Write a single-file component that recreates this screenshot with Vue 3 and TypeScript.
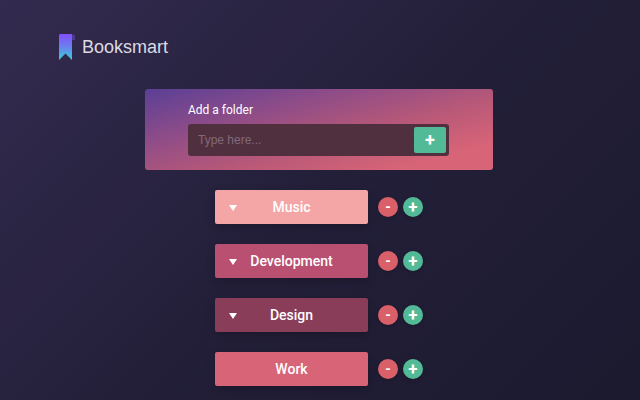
<script setup lang="ts">
interface Folder { name: string; color: string; arrow: boolean }
const folders: Folder[] = [
  { name: 'Music', color: '#f4a6a6', arrow: true },
  { name: 'Development', color: '#b95071', arrow: true },
  { name: 'Design', color: '#8a3d58', arrow: true },
  { name: 'Work', color: '#d86477', arrow: false },
]
</script>

<template>
  <div class="page">
    <header class="brand">
      <svg class="logo" width="17" height="26" viewBox="0 0 17 26">
        <defs>
          <linearGradient id="bm" x1="0" y1="0" x2="0" y2="1">
            <stop offset="0" stop-color="#7f4ffb" />
            <stop offset="0.45" stop-color="#6d7bf0" />
            <stop offset="1" stop-color="#38cfd8" />
          </linearGradient>
        </defs>
        <path d="M13 0.5H15.5C16.5 0.5 17 1 17 2V6H14Z" fill="#4e3a8c" />
        <path d="M2.5 0H13.5C14 0 14 1 14 2V26L7.5 19.5L1 26V1.5C1 .5 1.5 0 2.5 0Z" fill="url(#bm)" />
      </svg>
      <span class="brand-name">Booksmart</span>
    </header>

    <section class="card">
      <label class="card-label">Add a folder</label>
      <div class="field">
        <span class="placeholder">Type here...</span>
        <button class="add-btn">+</button>
      </div>
    </section>

    <ul class="folders">
      <li v-for="f in folders" :key="f.name" class="row">
        <div class="folder" :style="{ background: f.color }">
          <span v-if="f.arrow" class="arrow"></span>
          <span class="folder-name">{{ f.name }}</span>
        </div>
        <span class="round minus">-</span>
        <span class="round plus">+</span>
      </li>
    </ul>
  </div>
</template>

<style>
html, body { margin: 0; background: #211e35; }
</style>

<style scoped>
.page {
  width: 640px;
  height: 400px;
  overflow: hidden;
  box-sizing: border-box;
  padding: 34px 0 0;
  background: linear-gradient(135deg, #332b4f 0%, #231f39 50%, #1b1a2e 100%);
  display: flex;
  flex-direction: column;
  align-items: center;
}
.brand {
  align-self: flex-start;
  margin-left: 58px;
  height: 26px;
  display: flex;
  align-items: center;
  gap: 7px;
}
.logo { display: block; }
.brand-name {
  font-family: "Liberation Sans", sans-serif;
  font-size: 18px;
  color: #dcdae2;
}
.card {
  box-sizing: border-box;
  width: 348px;
  height: 81px;
  margin: 29px 2px 0 0;
  padding: 14px 44px 0 43px;
  border-radius: 3px;
  background: linear-gradient(165deg, #5a3f96 0%, #8d4c88 30%, #b75878 58%, #d86477 85%);
}
.card-label {
  display: block;
  height: 21px;
  font-family: Roboto, sans-serif;
  font-size: 12px;
  font-weight: 450;
  line-height: 15px;
  color: #fff;
}
.field {
  height: 32px;
  box-sizing: border-box;
  padding: 3px;
  border-radius: 3px;
  background: #50303f;
  display: flex;
  align-items: center;
  justify-content: space-between;
}
.placeholder {
  margin-left: 7px;
  font-family: "Liberation Sans", sans-serif;
  font-size: 12px;
  color: #806a78;
}
.add-btn {
  width: 32px;
  height: 26px;
  padding: 0;
  border: 0;
  border-radius: 2px;
  background: #52ba96;
  color: #fff;
  font-family: Roboto, sans-serif;
  font-size: 18px;
  font-weight: 700;
  line-height: 26px;
}
.folders {
  list-style: none;
  margin: 20px 2px 0 0;
  padding: 0;
  display: flex;
  flex-direction: column;
  gap: 20px;
}
.row {
  display: flex;
  align-items: center;
  gap: 5px;
}
.folder {
  position: relative;
  width: 153px;
  height: 34px;
  margin-right: 5px;
  border-radius: 2px;
  box-shadow: 0 3px 8px rgba(0, 0, 0, 0.22);
  display: flex;
  align-items: center;
  justify-content: center;
}
.folder-name {
  font-family: Roboto, sans-serif;
  font-size: 14px;
  font-weight: 500;
  color: #fff;
}
.arrow {
  position: absolute;
  left: 14px;
  top: 15px;
  width: 0;
  height: 0;
  border-left: 4px solid transparent;
  border-right: 4px solid transparent;
  border-top: 6px solid #fff;
}
.round {
  width: 20px;
  height: 20px;
  border-radius: 50%;
  color: #fff;
  font-family: Roboto, sans-serif;
  font-weight: 700;
  display: flex;
  align-items: center;
  justify-content: center;
  box-shadow: 0 1px 4px rgba(0, 0, 0, 0.2);
}
.minus { background: #d95f69; font-size: 14px; }
.plus { background: #52ba96; font-size: 17px; }
</style>
